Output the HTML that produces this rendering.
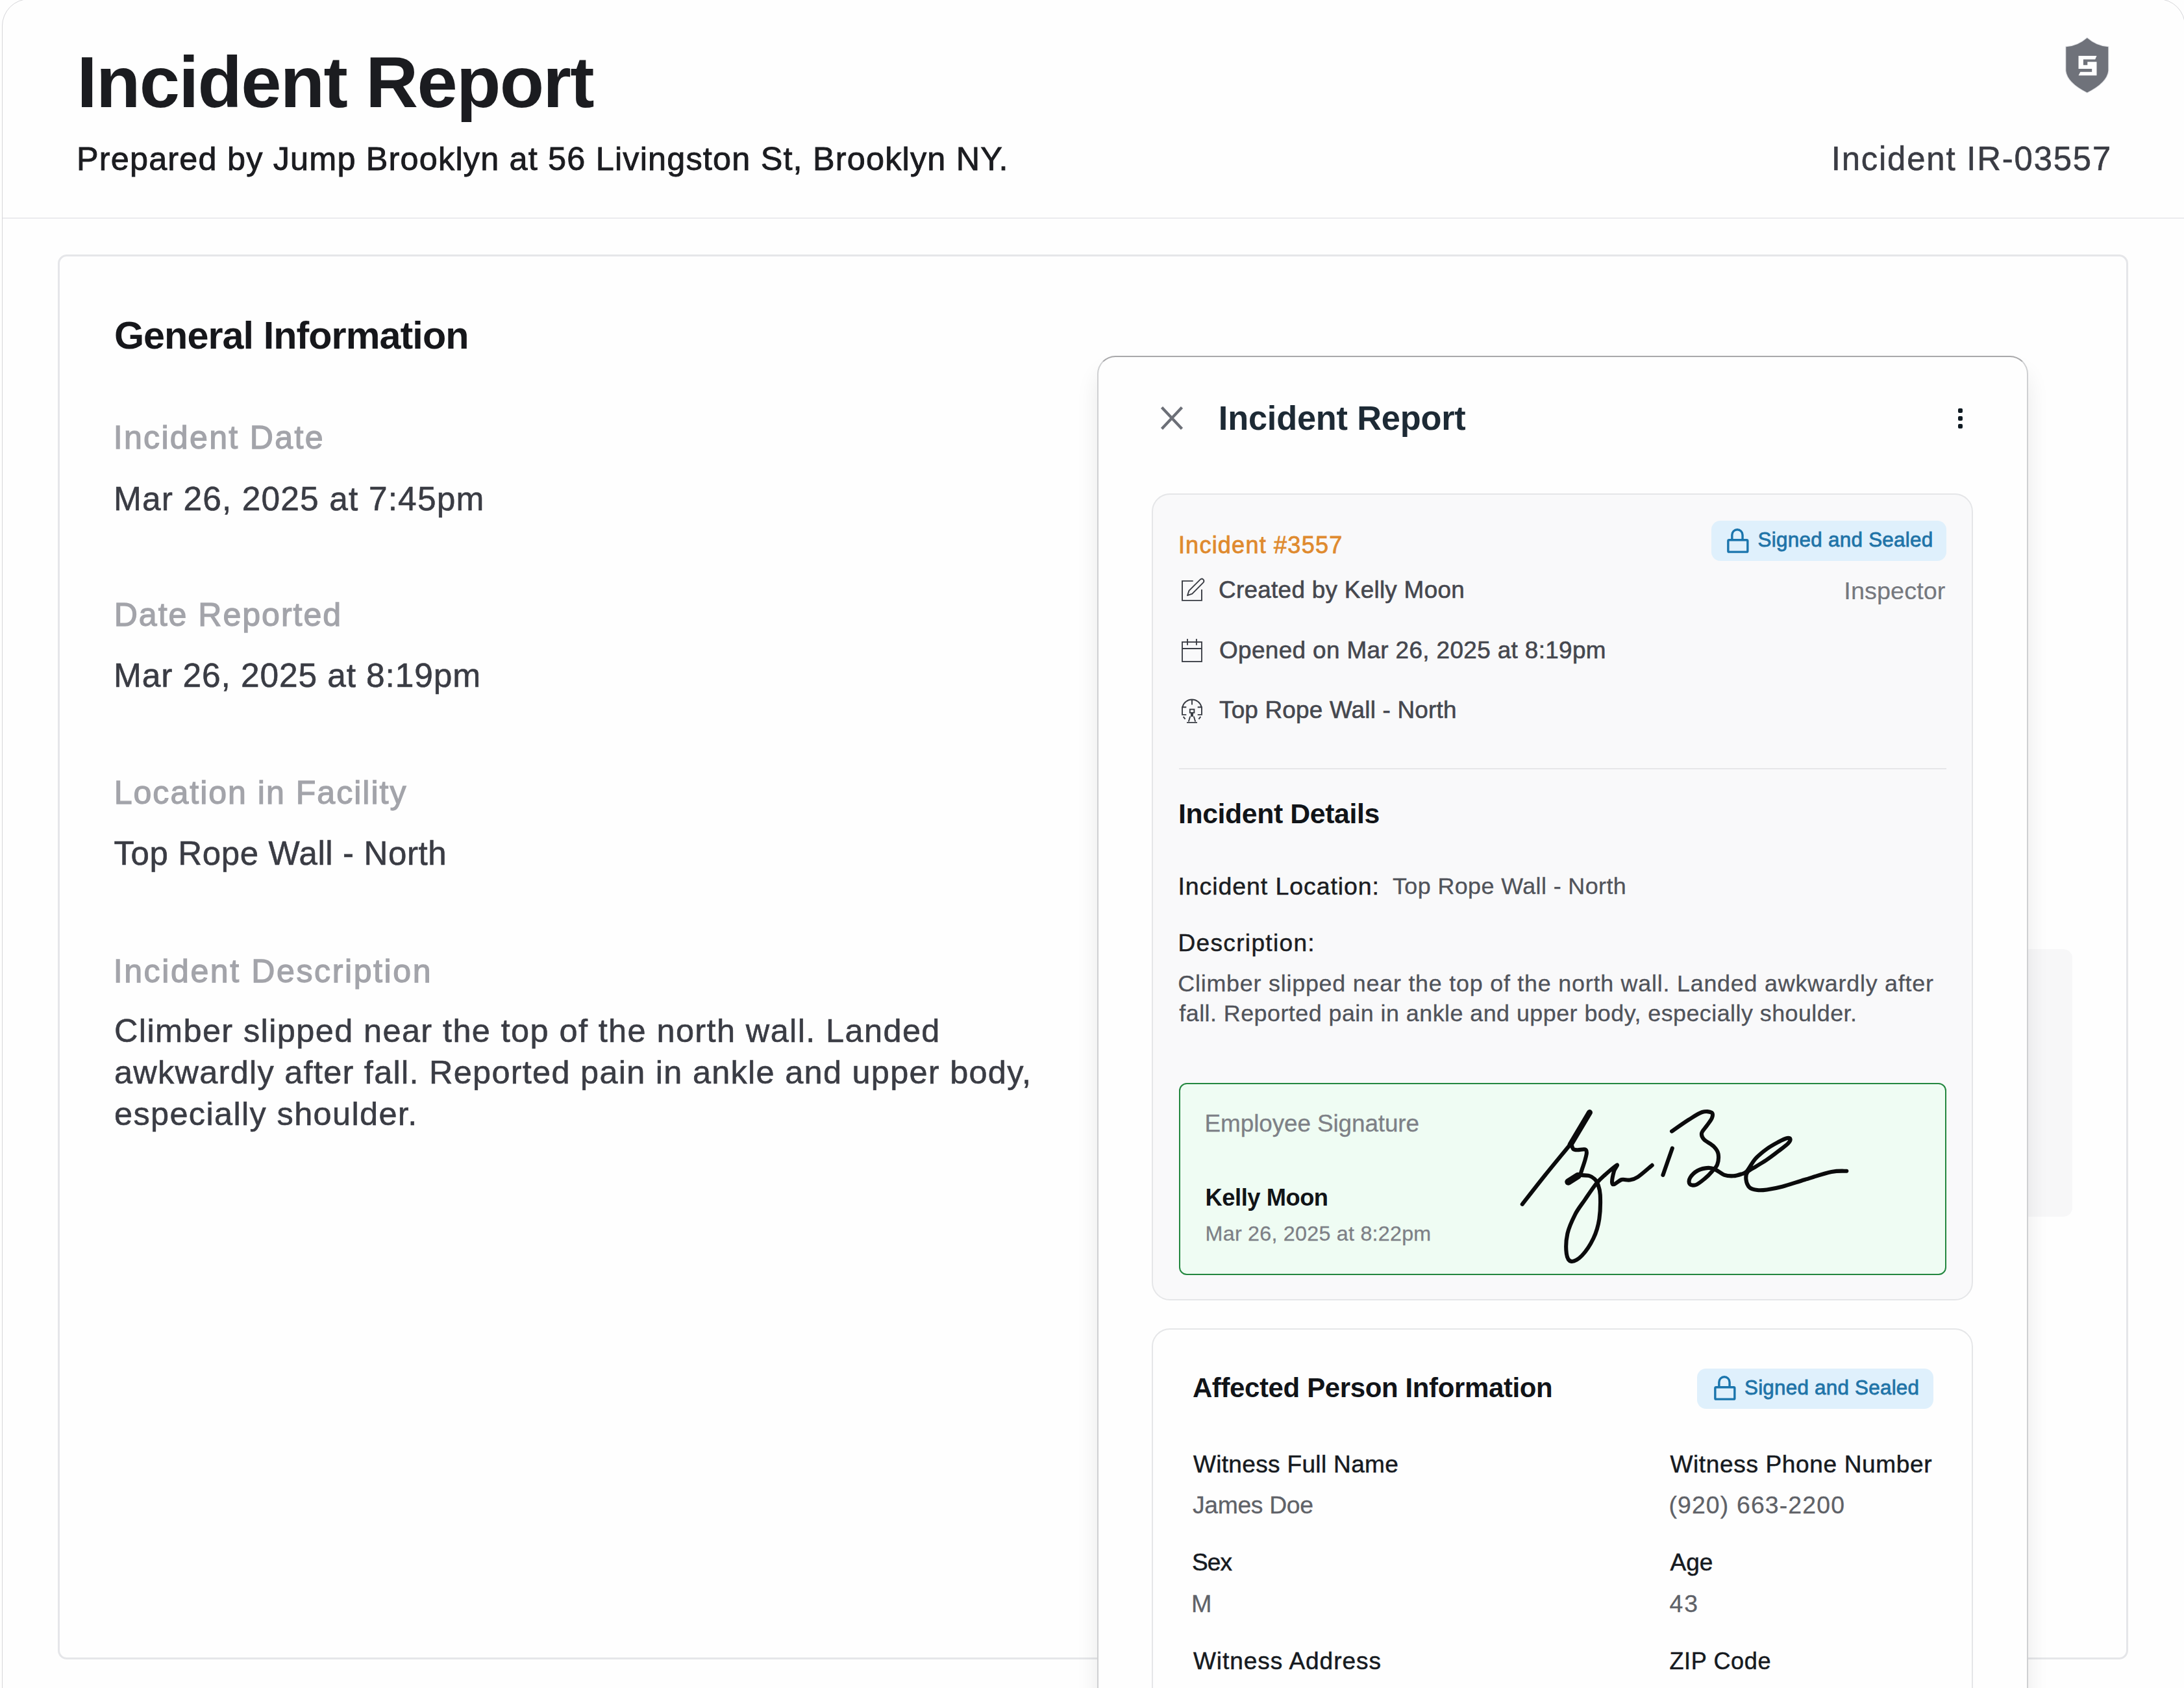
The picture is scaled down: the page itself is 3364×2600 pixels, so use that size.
<!DOCTYPE html>
<html><head><meta charset="utf-8"><style>
html,body{margin:0;padding:0;}
body{width:3364px;height:2600px;overflow:hidden;position:relative;background:#fefefe;font-family:"Liberation Sans",sans-serif;}
.t{position:absolute;white-space:nowrap;line-height:1;}
.ic{position:absolute;overflow:visible;}
.abs{position:absolute;box-sizing:border-box;}
</style></head><body>
<div class="abs" style="left:2.5px;top:-1.6px;width:3363px;height:2700px;border:1.3px solid #d6d6d9;border-radius:42px;"></div>
<div class="abs" style="left:4px;top:335px;width:3360px;height:2px;background:#ebebee;"></div>
<div class="abs" style="left:89px;top:392px;width:3189px;height:2164px;border:3px solid #e5e6e9;border-radius:14px;background:#fefefe;"></div>
<svg class="ic" style="left:3164px;top:0px" width="200" height="150" viewBox="0 0 200 150"><path d="M18.3 72.3Q36 71.5 50.8 58.6Q65.6 71.5 83.3 72.3V109Q81.5 127 50.8 142.5Q20.1 127 18.3 109Z" fill="#6f727a" stroke="#e4e5e8" stroke-width="2.4" paint-order="stroke"/><path d="M37.5 86H65.5L63.2 91.6H44.9V100.3H51.3V95.2H65.5V116.3H37.5L40.3 110.8H58.2V106H37.5Z" fill="#fefefe"/></svg>
<div class="abs" style="left:3124px;top:1462px;width:68px;height:412px;background:#f7f7f8;border-radius:0 14px 14px 0;"></div>
<div class="abs" style="left:1690px;top:548px;width:1434px;height:2200px;border:2.5px solid #cfd0d2;border-top:2px solid #a8a8aa;border-radius:28px;background:#fefefe;box-shadow:0 24px 34px rgba(0,0,0,0.085);"></div>
<svg class="ic" style="left:1770px;top:610px" width="70" height="70" viewBox="0 0 70 70" stroke="#6c6f77" stroke-width="4.3" stroke-linecap="butt"><path d="M19.5 17.5L50.5 50.5M50.5 17.5L19.5 50.5"/></svg>
<div class="abs" style="left:3015.5px;top:628.5px;width:7px;height:7px;border-radius:2px;background:#0f1a22;"></div>
<div class="abs" style="left:3015.5px;top:640.5px;width:7px;height:7px;border-radius:2px;background:#0f1a22;"></div>
<div class="abs" style="left:3015.5px;top:652.5px;width:7px;height:7px;border-radius:2px;background:#0f1a22;"></div>
<div class="abs" style="left:1774px;top:760px;width:1265px;height:1243px;border:2.5px solid #e5e6e8;border-radius:28px;background:#f9f9fa;"></div>
<div class="abs" style="left:1816px;top:1183px;width:1182px;height:2px;background:#e6e6e8;"></div>
<div class="abs" style="left:2635.8px;top:802px;width:362px;height:62px;border-radius:14px;background:#dff0fc;"></div>
<div class="abs" style="left:1816px;top:1667.5px;width:1182px;height:296.5px;border:2.5px solid #23873f;border-radius:12px;background:#effcf3;"></div>
<div class="abs" style="left:1774px;top:2046px;width:1265px;height:800px;border:2.5px solid #e5e6e8;border-radius:28px;background:#fefefe;"></div>
<div class="abs" style="left:2614px;top:2108px;width:364px;height:62px;border-radius:14px;background:#dff0fc;"></div>
<svg class="ic" style="left:1810px;top:880px" width="60" height="60" viewBox="0 0 60 60" fill="none" stroke="#393c43" stroke-width="1.9"><path d="M27.7 14.9H11V44.9H41V28"/><path d="M39.2 12.2Q41.5 10.8 43.4 12.6Q45.2 14.5 43.8 16.8L26.3 34.6L19 37.2L21.4 29.9Z" stroke-linejoin="round"/></svg>
<svg class="ic" style="left:1810px;top:975px" width="60" height="60" viewBox="0 0 60 60" fill="none" stroke="#393c43" stroke-width="1.85"><rect x="11" y="13.9" width="30" height="30.1"/><path d="M11 24H41M19 9V18.7M32.9 9V18.7"/></svg>
<svg class="ic" style="left:1810px;top:1065px" width="60" height="60" viewBox="0 0 60 60" fill="none" stroke="#393c43" stroke-width="1.9"><path d="M17.3 24.2H11.3A15.1 15.1 0 0 1 40.7 24.2H34.7M11 23.3V35.9H17.3M41 23.3V35.9H34.7M12.6 38.8L15.6 42.6M39.4 38.8L36.4 42.6M26 12.3V20.6"/><rect x="22.8" y="27.6" width="6.6" height="5.2"/><path d="M26 32.8V38.8" stroke-width="4"/><path d="M23.2 38.5L20.8 46.5M28.8 38.5L31.2 46.5M18 47.9H34"/></svg>
<svg class="ic" style="left:2650px;top:805px" width="50" height="55" viewBox="0 0 50 55" fill="none" stroke="#1a75ad" stroke-width="3.4"><rect x="11.85" y="26.75" width="30" height="18.4" rx="1.5"/><path d="M17.85 26.7V18.9a8.1 8.1 0 0 1 16.2 0V26.7"/></svg>
<svg class="ic" style="left:2629.5px;top:2110px" width="50" height="55" viewBox="0 0 50 55" fill="none" stroke="#1a75ad" stroke-width="3.4"><rect x="11.85" y="26.75" width="30" height="18.4" rx="1.5"/><path d="M17.85 26.7V18.9a8.1 8.1 0 0 1 16.2 0V26.7"/></svg>
<svg class="ic" style="left:2300px;top:1690px" width="580" height="280" viewBox="2300 1690 580 280" fill="none" stroke="#0b0b0c" stroke-width="6.1" stroke-linecap="round" stroke-linejoin="round"><path d="M2344.8 1854.8 C2350.7 1847.3 2367.7 1825.3 2380.0 1810.0 C2392.3 1794.7 2412.1 1770.8 2418.5 1763.0"/><path d="M2420.7 1763.0 C2421.1 1764.1 2421.7 1768.3 2423.2 1769.7 C2424.7 1771.1 2426.8 1771.2 2429.8 1771.3 C2432.8 1771.4 2439.1 1769.8 2441.4 1770.5 C2443.8 1771.2 2443.9 1772.8 2443.9 1775.5 C2443.9 1778.2 2442.5 1783.0 2441.4 1787.0 C2440.3 1791.0 2438.5 1795.8 2437.3 1799.5 C2436.1 1803.2 2434.8 1807.4 2434.3 1809.0"/><path d="M2434.0 1810.0 C2436.3 1810.2 2444.3 1810.1 2448.0 1811.1 C2451.7 1812.1 2454.1 1814.0 2456.3 1816.1 C2458.5 1818.2 2459.6 1819.4 2461.0 1823.5 C2462.4 1827.6 2464.4 1831.7 2464.8 1840.7 C2465.2 1849.7 2465.0 1866.6 2463.3 1877.7 C2461.6 1888.8 2458.9 1897.9 2454.4 1907.3 C2449.9 1916.7 2442.3 1928.1 2436.6 1934.0 C2430.9 1939.9 2424.2 1943.4 2420.3 1942.9 C2416.4 1942.4 2413.9 1938.2 2412.9 1931.0 C2411.9 1923.8 2412.2 1910.1 2414.4 1900.0 C2416.6 1889.9 2421.9 1879.0 2426.3 1870.3 C2430.8 1861.6 2435.7 1856.0 2441.1 1848.1 C2446.5 1840.2 2453.7 1829.3 2458.9 1822.9 C2464.1 1816.5 2466.9 1814.3 2472.2 1809.6 C2477.5 1804.9 2488.2 1795.4 2490.5 1794.5 C2492.8 1793.6 2487.2 1799.6 2486.0 1804.0 C2484.8 1808.4 2482.9 1817.7 2483.0 1821.0 C2483.1 1824.3 2484.0 1824.7 2486.5 1824.0 C2489.0 1823.3 2493.9 1818.1 2497.8 1817.0 C2501.7 1815.9 2505.9 1818.2 2510.0 1817.5 C2514.1 1816.8 2516.7 1816.8 2522.5 1813.0 C2528.3 1809.2 2541.0 1797.8 2544.7 1794.8"/><path d="M2575.8 1768.7 C2573.4 1775.6 2563.8 1803.0 2561.4 1809.9"/><path d="M2575.1 1742.6 C2579.4 1739.6 2593.4 1729.6 2601.2 1724.7 C2609.0 1719.8 2616.0 1714.8 2621.8 1713.0 C2627.6 1711.2 2633.7 1712.2 2636.2 1713.7 C2638.7 1715.2 2638.2 1718.6 2636.9 1722.0 C2635.7 1725.4 2631.3 1730.4 2628.7 1734.3 C2626.1 1738.2 2621.8 1741.8 2621.1 1745.3 C2620.4 1748.8 2621.5 1751.6 2624.6 1755.0 C2627.7 1758.4 2636.0 1762.2 2639.7 1765.9 C2643.3 1769.6 2645.6 1772.3 2646.5 1776.9 C2647.4 1781.5 2646.8 1788.8 2645.2 1793.4 C2643.6 1798.0 2640.1 1800.7 2636.9 1804.4 C2633.7 1808.1 2630.0 1812.0 2625.9 1815.4 C2621.8 1818.8 2616.1 1823.6 2612.2 1825.0 C2608.3 1826.4 2604.1 1825.4 2602.6 1823.6 C2601.1 1821.8 2601.2 1817.4 2603.3 1814.0 C2605.4 1810.6 2610.3 1805.5 2615.0 1803.0 C2619.7 1800.5 2626.8 1799.1 2631.4 1798.9 C2636.0 1798.7 2638.3 1799.8 2642.4 1801.6 C2646.5 1803.4 2651.6 1808.3 2656.2 1809.9 C2660.8 1811.5 2665.6 1811.5 2669.9 1811.3 C2674.2 1811.1 2678.5 1809.7 2682.0 1808.5 C2685.5 1807.3 2687.1 1807.9 2690.7 1804.0 C2694.3 1800.1 2698.6 1790.7 2703.7 1785.0 C2708.8 1779.3 2715.6 1773.9 2721.5 1769.6 C2727.4 1765.3 2734.0 1761.8 2739.2 1759.0 C2744.4 1756.2 2749.8 1753.7 2752.9 1753.0 C2756.0 1752.3 2757.4 1753.4 2757.6 1754.8 C2757.8 1756.2 2757.1 1758.2 2754.0 1761.3 C2750.9 1764.4 2744.6 1769.0 2739.2 1773.2 C2733.8 1777.4 2727.1 1782.4 2721.5 1786.2 C2715.9 1790.0 2710.4 1793.1 2705.5 1796.3 C2700.6 1799.5 2694.5 1801.8 2691.8 1805.2 C2689.1 1808.7 2689.0 1813.0 2689.5 1817.0 C2690.0 1821.0 2691.9 1826.2 2694.8 1828.9 C2697.7 1831.6 2702.2 1832.4 2706.7 1833.0 C2711.1 1833.6 2715.1 1833.3 2721.5 1832.4 C2727.9 1831.5 2735.4 1830.3 2745.2 1827.7 C2754.9 1825.1 2767.4 1820.8 2780.0 1817.0 C2792.6 1813.2 2810.3 1807.3 2821.0 1805.1 C2831.7 1802.9 2840.4 1803.9 2844.3 1803.7"/><path d="M2419 1763 L2448.5 1713.5" stroke-width="9"/><path d="M2430.5 1811 L2415.5 1820.5" stroke-width="10.5"/></svg>
<div class="t" style="left:118.6px;top:71.0px;font-size:111.93px;letter-spacing:-1.71px;color:#1b1c20;font-weight:700;">Incident Report</div>
<div class="t" style="left:118.0px;top:220.3px;font-size:50.39px;letter-spacing:1.19px;color:#1b1c20;-webkit-text-stroke:0.9px #1b1c20;">Prepared by Jump Brooklyn at 56 Livingston St, Brooklyn NY.</div>
<div class="t" style="left:2820.7px;top:219.9px;font-size:50.88px;letter-spacing:1.81px;color:#3a3c44;-webkit-text-stroke:0.6px #3a3c44;">Incident IR-03557</div>
<div class="t" style="left:175.9px;top:486.6px;font-size:59.30px;letter-spacing:-0.94px;color:#16171b;font-weight:700;">General Information</div>
<div class="t" style="left:174.7px;top:648.6px;font-size:50.07px;letter-spacing:2.32px;color:#a3a4aa;-webkit-text-stroke:1.3px #a3a4aa;">Incident Date</div>
<div class="t" style="left:175.0px;top:742.8px;font-size:51.46px;letter-spacing:1.14px;color:#3a3c44;-webkit-text-stroke:0.6px #3a3c44;">Mar 26, 2025 at 7:45pm</div>
<div class="t" style="left:175.7px;top:921.8px;font-size:50.07px;letter-spacing:1.99px;color:#a3a4aa;-webkit-text-stroke:1.3px #a3a4aa;">Date Reported</div>
<div class="t" style="left:175.0px;top:1015.4px;font-size:51.46px;letter-spacing:0.90px;color:#3a3c44;-webkit-text-stroke:0.6px #3a3c44;">Mar 26, 2025 at 8:19pm</div>
<div class="t" style="left:175.7px;top:1196.0px;font-size:50.07px;letter-spacing:2.00px;color:#a3a4aa;-webkit-text-stroke:1.3px #a3a4aa;">Location in Facility</div>
<div class="t" style="left:175.5px;top:1288.8px;font-size:51.02px;letter-spacing:0.61px;color:#3a3c44;-webkit-text-stroke:0.6px #3a3c44;">Top Rope Wall - North</div>
<div class="t" style="left:174.7px;top:1470.6px;font-size:50.07px;letter-spacing:2.59px;color:#a3a4aa;-webkit-text-stroke:1.3px #a3a4aa;">Incident Description</div>
<div class="t" style="left:176.0px;top:1562.8px;font-size:50.44px;letter-spacing:1.40px;color:#3a3c44;-webkit-text-stroke:0.6px #3a3c44;">Climber slipped near the top of the north wall. Landed</div>
<div class="t" style="left:176.0px;top:1627.1px;font-size:50.44px;letter-spacing:1.28px;color:#3a3c44;-webkit-text-stroke:0.6px #3a3c44;">awkwardly after fall. Reported pain in ankle and upper body,</div>
<div class="t" style="left:176.0px;top:1691.4px;font-size:50.44px;letter-spacing:1.37px;color:#3a3c44;-webkit-text-stroke:0.6px #3a3c44;">especially shoulder.</div>
<div class="t" style="left:1876.8px;top:617.9px;font-size:52.34px;letter-spacing:-0.20px;color:#1d2a35;font-weight:700;">Incident Report</div>
<div class="t" style="left:1814.9px;top:822.3px;font-size:36.07px;letter-spacing:1.21px;color:#df8a2e;-webkit-text-stroke:0.8px #df8a2e;">Incident #3557</div>
<div class="t" style="left:2707.5px;top:816.2px;font-size:31.40px;letter-spacing:0.28px;color:#1f74a8;-webkit-text-stroke:0.8px #1f74a8;">Signed and Sealed</div>
<div class="t" style="left:1877.0px;top:891.3px;font-size:36.92px;letter-spacing:0.27px;color:#45474e;-webkit-text-stroke:0.6px #45474e;">Created by Kelly Moon</div>
<div class="t" style="left:2840.3px;top:891.6px;font-size:37.79px;letter-spacing:0.09px;color:#75787e;-webkit-text-stroke:0.2px #75787e;">Inspector</div>
<div class="t" style="left:1878.0px;top:984.0px;font-size:36.92px;letter-spacing:0.35px;color:#45474e;-webkit-text-stroke:0.6px #45474e;">Opened on Mar 26, 2025 at 8:19pm</div>
<div class="t" style="left:1878.0px;top:1076.3px;font-size:36.92px;letter-spacing:0.19px;color:#45474e;-webkit-text-stroke:0.6px #45474e;">Top Rope Wall - North</div>
<div class="t" style="left:1814.9px;top:1232.3px;font-size:42.81px;letter-spacing:-0.39px;color:#111418;font-weight:700;">Incident Details</div>
<div class="t" style="left:1814.5px;top:1347.0px;font-size:37.50px;letter-spacing:0.91px;color:#1b1d22;-webkit-text-stroke:0.5px #1b1d22;">Incident Location:</div>
<div class="t" style="left:2145.0px;top:1347.5px;font-size:35.90px;letter-spacing:0.40px;color:#50535a;-webkit-text-stroke:0.3px #50535a;">Top Rope Wall - North</div>
<div class="t" style="left:1814.5px;top:1434.1px;font-size:37.06px;letter-spacing:1.32px;color:#1b1d22;-webkit-text-stroke:0.5px #1b1d22;">Description:</div>
<div class="t" style="left:1814.3px;top:1497.6px;font-size:35.90px;letter-spacing:0.76px;color:#50535a;-webkit-text-stroke:0.3px #50535a;">Climber slipped near the top of the north wall. Landed awkwardly after</div>
<div class="t" style="left:1816.3px;top:1543.9px;font-size:35.90px;letter-spacing:0.45px;color:#50535a;-webkit-text-stroke:0.3px #50535a;">fall. Reported pain in ankle and upper body, especially shoulder.</div>
<div class="t" style="left:1855.6px;top:1713.3px;font-size:36.92px;letter-spacing:-0.11px;color:#7d8086;-webkit-text-stroke:0.3px #7d8086;">Employee Signature</div>
<div class="t" style="left:1856.6px;top:1827.0px;font-size:36.35px;letter-spacing:-0.48px;color:#111417;font-weight:700;">Kelly Moon</div>
<div class="t" style="left:1856.6px;top:1884.1px;font-size:32.28px;letter-spacing:0.24px;color:#7d8086;-webkit-text-stroke:0.3px #7d8086;">Mar 26, 2025 at 8:22pm</div>
<div class="t" style="left:1836.9px;top:2117.3px;font-size:42.01px;letter-spacing:-0.38px;color:#111418;font-weight:700;">Affected Person Information</div>
<div class="t" style="left:2687.0px;top:2122.3px;font-size:31.40px;letter-spacing:0.23px;color:#1f74a8;-webkit-text-stroke:0.8px #1f74a8;">Signed and Sealed</div>
<div class="t" style="left:1837.9px;top:2236.6px;font-size:37.06px;letter-spacing:0.32px;color:#161a1f;-webkit-text-stroke:0.5px #161a1f;">Witness Full Name</div>
<div class="t" style="left:1836.9px;top:2299.7px;font-size:37.36px;letter-spacing:-0.36px;color:#5f6268;-webkit-text-stroke:0.3px #5f6268;">James Doe</div>
<div class="t" style="left:1835.9px;top:2388.3px;font-size:37.06px;letter-spacing:-0.80px;color:#161a1f;-webkit-text-stroke:0.5px #161a1f;">Sex</div>
<div class="t" style="left:1834.9px;top:2452.4px;font-size:37.79px;letter-spacing:0.00px;color:#5f6268;-webkit-text-stroke:0.3px #5f6268;">M</div>
<div class="t" style="left:1837.9px;top:2540.2px;font-size:37.06px;letter-spacing:0.94px;color:#161a1f;-webkit-text-stroke:0.5px #161a1f;">Witness Address</div>
<div class="t" style="left:2572.4px;top:2236.6px;font-size:37.06px;letter-spacing:0.63px;color:#161a1f;-webkit-text-stroke:0.5px #161a1f;">Witness Phone Number</div>
<div class="t" style="left:2570.4px;top:2299.7px;font-size:37.36px;letter-spacing:1.16px;color:#5f6268;-webkit-text-stroke:0.3px #5f6268;">(920) 663-2200</div>
<div class="t" style="left:2572.4px;top:2388.3px;font-size:37.06px;letter-spacing:0.05px;color:#161a1f;-webkit-text-stroke:0.5px #161a1f;">Age</div>
<div class="t" style="left:2571.4px;top:2451.6px;font-size:37.36px;letter-spacing:2.20px;color:#5f6268;-webkit-text-stroke:0.3px #5f6268;">43</div>
<div class="t" style="left:2571.4px;top:2540.6px;font-size:36.09px;letter-spacing:0.63px;color:#161a1f;-webkit-text-stroke:0.5px #161a1f;">ZIP Code</div>
</body></html>
